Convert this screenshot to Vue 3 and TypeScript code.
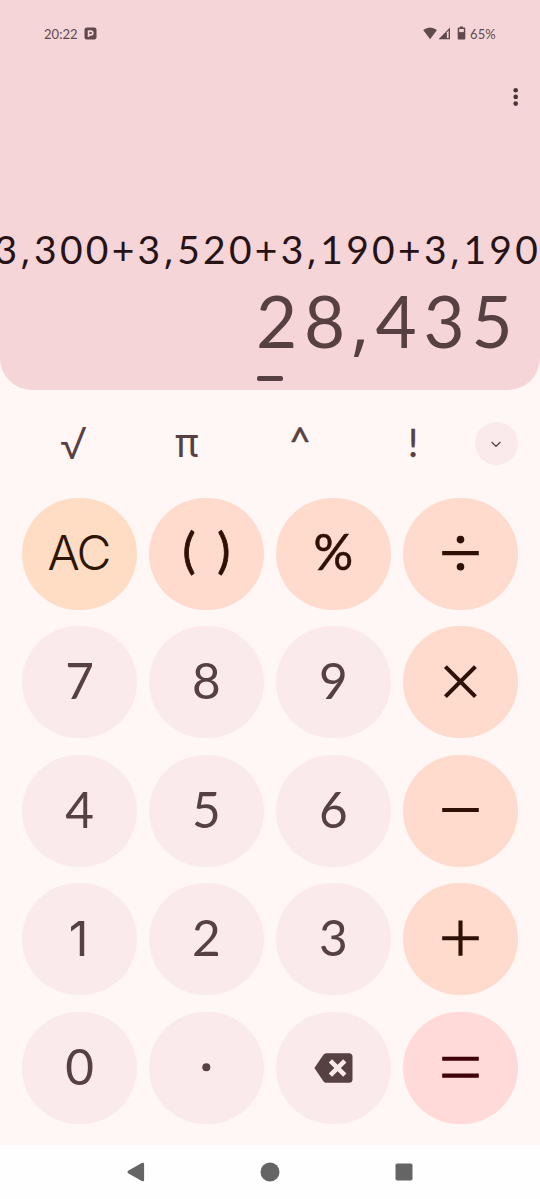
<script setup lang="ts">
type Tone = 'num' | 'op' | 'clear' | 'equals'
interface Key {
  label: string
  tone: Tone
  icon?: string
  cls?: string
}

const expression = '3,300+3,520+3,190+3,190'.split('')
const result = '28,435'.split('')
const functions = [
  { label: '√', cls: 'root' },
  { label: 'π', cls: 'pi' },
  { label: '^', cls: 'caret' },
  { label: '!', cls: 'bang' },
]

const keys: Key[] = [
  { label: 'AC', tone: 'clear', cls: 'ac' },
  { label: '( )', tone: 'op', cls: 'parens' },
  { label: '%', tone: 'op', cls: 'percent' },
  { label: 'divide', tone: 'op', icon: 'divide' },
  { label: '7', tone: 'num' },
  { label: '8', tone: 'num' },
  { label: '9', tone: 'num' },
  { label: 'multiply', tone: 'op', icon: 'multiply' },
  { label: '4', tone: 'num' },
  { label: '5', tone: 'num' },
  { label: '6', tone: 'num' },
  { label: 'minus', tone: 'op', icon: 'minus' },
  { label: '1', tone: 'num', cls: 'one' },
  { label: '2', tone: 'num' },
  { label: '3', tone: 'num' },
  { label: 'plus', tone: 'op', icon: 'plus' },
  { label: '0', tone: 'num' },
  { label: 'point', tone: 'num', icon: 'point' },
  { label: 'delete', tone: 'num', icon: 'delete' },
  { label: 'equals', tone: 'equals', icon: 'equals' },
]
</script>

<template>
  <main class="phone">
    <section class="display">
      <header class="status">
        <span class="clock">20:22</span>
        <svg class="app-badge" width="13" height="13" viewBox="0 0 13 13">
          <rect x="0.5" y="0.5" width="12" height="12" rx="2.2" fill="#604a4d" />
          <path d="M4.6 10V4.2h2.3a1.8 1.8 0 0 1 0 3.7H4.8" fill="none" stroke="#f5d5d8" stroke-width="1.7" />
        </svg>
        <svg class="signals" width="44" height="15" viewBox="0 0 44 15">
          <g fill="#604a4d">
            <path d="M0.2 4Q7 -1.2 14 4L7.1 13.2Z" />
            <path d="M15.5 13.2L27 1.4V13.2Z" />
            <path d="M37 1.6V0.6h3V1.6h1.4q.9 0 .9.9v10q0 .9-.9.9h-5.8q-.9 0-.9-.9V2.5q0-.9.9-.9z" />
          </g>
          <path d="M23.9 6.2L25.6 4.6V12H23.9Z" fill="#f5d5d8" />
          <rect x="36.2" y="3" width="4.6" height="3.1" fill="#f5d5d8" />
        </svg>
        <span class="battery">65%</span>
      </header>
      <div class="menu-row">
        <svg width="6" height="20" viewBox="0 0 6 20" fill="#493436">
          <circle cx="2.7" cy="3.2" r="2.3" />
          <circle cx="2.7" cy="9.9" r="2.3" />
          <circle cx="2.7" cy="16.6" r="2.3" />
        </svg>
      </div>
      <div class="expression">
        <span v-for="(c, i) in expression" :key="i" class="char" :class="{ comma: c === ',', plus: c === '+' }">{{ c }}</span>
      </div>
      <div class="result">
        <span v-for="(c, i) in result" :key="i" class="char" :class="{ comma: c === ',' }">{{ c }}</span>
      </div>
      <div class="handle"></div>
    </section>

    <section class="functions">
      <span v-for="f in functions" :key="f.label" class="fn" :class="f.cls">{{ f.label }}</span>
      <button class="expand" aria-label="expand">
        <svg width="14" height="10" viewBox="0 0 14 10">
          <path d="M2.6 3L7 7.3L11.4 3" fill="none" stroke="#574042" stroke-width="1.2" />
        </svg>
      </button>
    </section>

    <section class="keypad">
      <button v-for="k in keys" :key="k.label" class="key" :class="k.tone" :aria-label="k.label">
        <svg v-if="k.icon" class="glyph" width="48" height="48" viewBox="-24 -24 48 48" fill="none" stroke="currentColor" stroke-width="4.1">
          <template v-if="k.icon === 'divide'">
            <path d="M-17.8 -0.9H18.8" />
            <circle cx="0.5" cy="-14.4" r="3.8" fill="currentColor" stroke="none" />
            <circle cx="0.5" cy="12.7" r="3.8" fill="currentColor" stroke="none" />
          </template>
          <path v-else-if="k.icon === 'multiply'" d="M-14.6 -15.4L15.4 14.6M15.4 -15.4L-14.6 14.6" />
          <path v-else-if="k.icon === 'minus'" d="M-17.8 -1H18.8" />
          <path v-else-if="k.icon === 'plus'" d="M-17.8 -0.8H18.8M0.5 -18.4V16.8" />
          <path v-else-if="k.icon === 'equals'" d="M-17.8 -9.3H18.8M-17.8 7.6H18.8" />
          <circle v-else-if="k.icon === 'point'" cx="0.3" cy="-0.8" r="4" fill="currentColor" stroke="none" />
          <template v-else>
            <path d="M-18.6 0L-9.6 -13.2Q-8.4 -14.8 -6.6 -14.8H16Q19.5 -14.8 19.5 -11.3V11.3Q19.5 14.8 16 14.8H-6.6Q-8.4 14.8 -9.6 13.2Z" fill="currentColor" stroke="none" />
            <path d="M-2.6 -7.2L11.8 7.2M11.8 -7.2L-2.6 7.2" stroke="#fbeaeb" stroke-width="4.6" />
          </template>
        </svg>
        <span v-else class="text" :class="k.cls">{{ k.label }}</span>
      </button>
    </section>

    <nav class="navbar">
      <svg width="20" height="22" viewBox="0 0 20 22">
        <path d="M2.8 11L16.8 3V19Z" fill="#656565" stroke="#656565" stroke-width="2.6" stroke-linejoin="round" />
      </svg>
      <svg width="20" height="20" viewBox="0 0 20 20"><circle cx="10" cy="10" r="9.5" fill="#656565" /></svg>
      <svg width="20" height="20" viewBox="0 0 20 20"><rect x="1.5" y="1.5" width="17" height="17" rx="1.8" fill="#656565" /></svg>
    </nav>
  </main>
</template>

<style>
body {
  margin: 0;
  background: #fff7f5;
}
</style>

<style scoped>
.phone {
  width: 540px;
  height: 1199px;
  overflow: hidden;
  display: flex;
  flex-direction: column;
  background: #fff7f5;
  color: #574042;
  font-family: Lato, 'Open Sans', sans-serif;
}
.display {
  box-sizing: border-box;
  height: 390px;
  flex: none;
  display: flex;
  flex-direction: column;
  background: #f5d5d8;
  border-radius: 0 0 32px 32px;
}
.status {
  box-sizing: border-box;
  height: 67px;
  padding: 0 44px;
  display: flex;
  align-items: center;
  font-size: 13px;
  color: #604a4d;
}
.clock {
  letter-spacing: 0.05px;
  width: 40px;
}
.signals {
  margin-left: 326px;
  flex: none;
}
.battery {
  margin-left: 3px;
  letter-spacing: 0.1px;
}
.menu-row {
  height: 60px;
  padding-right: 21px;
  display: flex;
  align-items: center;
  justify-content: flex-end;
}
.expression,
.result {
  display: flex;
  justify-content: flex-end;
}
.char {
  flex: none;
  text-align: center;
}
.expression {
  height: 54px;
  margin-top: 95px;
  padding-right: 0.5px;
  color: #271315;
  font-size: 39px;
  line-height: 54px;
}
.expression .char {
  width: 25.9px;
}
.result {
  height: 84px;
  margin-top: 3px;
  padding-right: 24px;
  font-size: 71px;
  line-height: 84px;
}
.result .char {
  width: 48px;
}
.expression .comma,
.result .comma {
  font-family: 'Open Sans', sans-serif;
}
.expression .comma {
  width: 13.7px;
}
.result .comma {
  width: 23.4px;
}
.handle {
  width: 26.5px;
  height: 5px;
  margin: 12.5px auto 0;
  border-radius: 2px;
  background: #574042;
}
.functions {
  height: 107px;
  flex: none;
  padding: 0 22px 0 17px;
  display: grid;
  grid-template-columns: repeat(4, 113.2px) 1fr;
  align-items: center;
}
.fn {
  box-sizing: border-box;
  height: 50px;
  text-align: center;
  font-size: 38px;
  line-height: 46px;
}
.fn.root {
  font-family: Inter, sans-serif;
  font-weight: 300;
  font-size: 44px;
  line-height: 48px;
}
.fn.pi {
  font-family: Inter, sans-serif;
  font-size: 39px;
  line-height: 47px;
}
.fn.caret {
  line-height: 45px;
  -webkit-text-stroke: 0.5px currentColor;
}
.fn.bang {
  -webkit-text-stroke: 0.4px currentColor;
}
.expand {
  width: 43.5px;
  height: 43.5px;
  padding: 0;
  justify-self: end;
  display: flex;
  align-items: center;
  justify-content: center;
  border: 0;
  border-radius: 50%;
  background: #fbeaeb;
}
.keypad {
  height: 648px;
  flex: none;
  box-sizing: border-box;
  padding: 0.5px 21.7px 0;
  display: grid;
  grid-template-columns: repeat(4, 115.6px);
  grid-auto-rows: 112px;
  gap: 16.5px 11.4px;
}
.key {
  padding: 0;
  border: 0;
  border-radius: 56px;
  display: flex;
  align-items: center;
  justify-content: center;
  font-family: inherit;
  font-size: 49.5px;
  line-height: 60px;
  color: #574042;
  background: #fbeaeb;
}
.key.op {
  color: #2f1005;
  background: #ffdbce;
}
.key.clear {
  color: #2d1500;
  background: #ffddc5;
}
.key.equals {
  color: #400207;
  background: #ffdad8;
}
.glyph {
  display: block;
}
.text {
  padding-bottom: 4px;
}
.text.ac {
  font-family: Inter, sans-serif;
  font-size: 48px;
  font-weight: 300;
  letter-spacing: -2px;
  padding: 0 2px 2px 0;
}
.text.parens {
  font-size: 49px;
  word-spacing: 9px;
  padding-bottom: 9px;
  -webkit-text-stroke: 0.8px currentColor;
}
.text.percent {
  padding-bottom: 5px;
  -webkit-text-stroke: 0.5px currentColor;
}
.text.one {
  font-family: Inter, sans-serif;
  font-size: 48.5px;
  padding: 0 1.5px 1px 0;
}
.navbar {
  flex: 1;
  display: grid;
  grid-template-columns: repeat(3, 134.3px);
  justify-content: center;
  justify-items: center;
  align-items: center;
  background: #fefefe;
}
</style>
